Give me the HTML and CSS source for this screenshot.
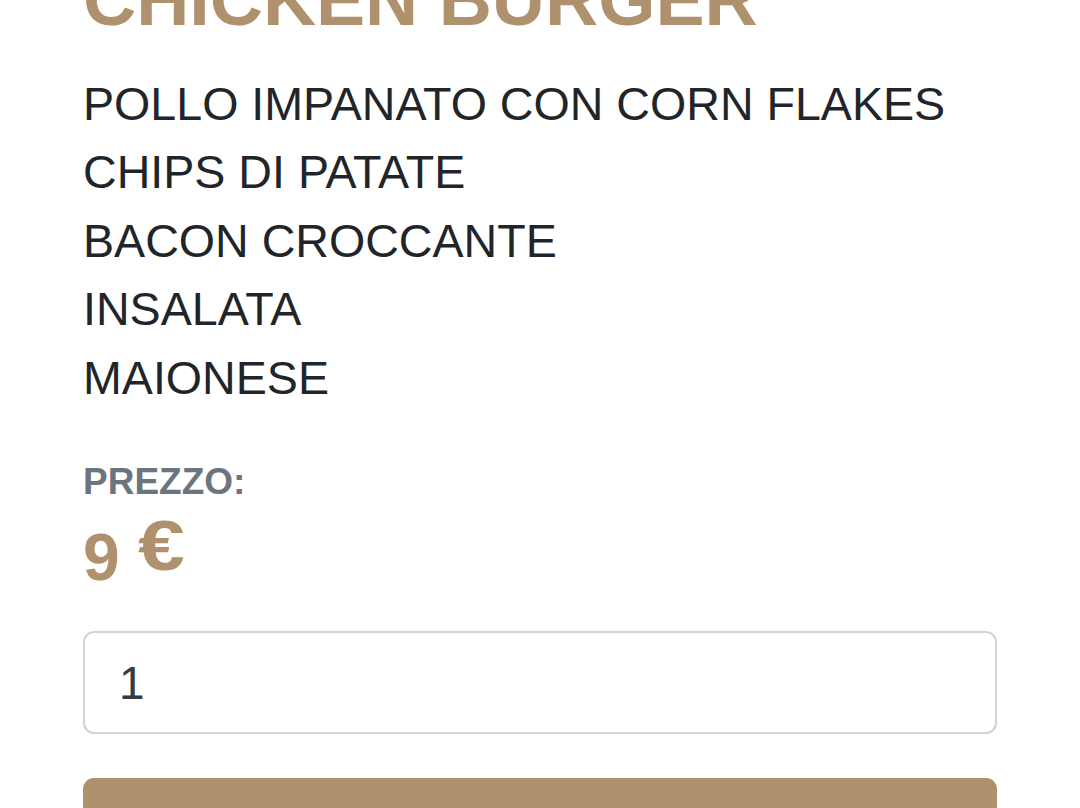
FILE: index.html
```html
<!DOCTYPE html>
<html lang="it">
<head>
<meta charset="utf-8">
<title>Chicken Burger</title>
<link rel="stylesheet" href="styles.css">
</head>
<body>
<main class="product">
  <h1 class="product-title">CHICKEN BURGER</h1>
  <ul class="ingredients">
    <li>POLLO IMPANATO CON CORN FLAKES</li>
    <li>CHIPS DI PATATE</li>
    <li>BACON CROCCANTE</li>
    <li>INSALATA</li>
    <li>MAIONESE</li>
  </ul>
  <div class="price-label">PREZZO:</div>
  <div class="price">9 <span class="currency">€</span></div>
  <input class="qty" type="number" value="1" min="1">
  <button class="add-btn" type="button">AGGIUNGI AL CARRELLO</button>
</main>
</body>
</html>
```
FILE: styles.css
```css
html, body {
  margin: 0;
  padding: 0;
  background: #ffffff;
  overflow: hidden;
}
body {
  font-family: "Liberation Sans", Arial, sans-serif;
  color: #212529;
}
.product {
  display: flex;
  flex-direction: column;
  align-items: stretch;
  padding: 0 83px;
  width: 914px;
}
.product-title {
  margin: -37px 0 0 0;
  font-size: 73.6px;
  line-height: 1;
  font-weight: 700;
  color: #b0916e;
  white-space: nowrap;
}
.ingredients {
  list-style: none;
  margin: 33px 0 0 0;
  padding: 0;
  font-size: 46.6px;
  line-height: 68.5px;
  color: #212529;
}
.price-label {
  margin-top: 48px;
  font-size: 37px;
  line-height: 1.2;
  font-weight: 700;
  color: #6c757d;
}
.price {
  margin-top: 20px;
  font-size: 66px;
  line-height: 66px;
  font-weight: 700;
  color: #b0916e;
}
.currency {
  display: inline-block;
  font-size: 70px;
  vertical-align: 10px;
  line-height: 0;
  transform: scaleX(1.2);
  transform-origin: left center;
}
.qty {
  margin-top: 41px;
  box-sizing: border-box;
  height: 103px;
  width: 100%;
  border: 2px solid #ced4da;
  border-radius: 11px;
  padding: 0 34px;
  font-family: "Liberation Sans", Arial, sans-serif;
  font-size: 46px;
  color: #343a40;
  background: #fff;
  outline: none;
  -moz-appearance: textfield;
  appearance: textfield;
}
.qty::-webkit-inner-spin-button,
.qty::-webkit-outer-spin-button {
  -webkit-appearance: none;
  margin: 0;
}
.add-btn {
  margin-top: 44px;
  height: 150px;
  width: 100%;
  border: none;
  border-radius: 11px;
  background: #b0916e;
  color: #fff;
  font-family: "Liberation Sans", Arial, sans-serif;
  font-size: 40px;
  font-weight: 700;
}
```
